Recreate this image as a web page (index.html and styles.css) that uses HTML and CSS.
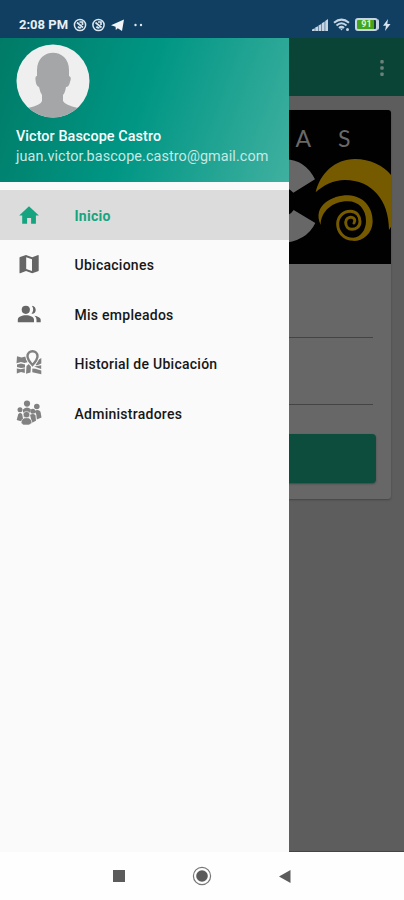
FILE: index.html
```html
<!DOCTYPE html>
<html lang="es">
<head>
<meta charset="utf-8">
<meta name="viewport" content="width=device-width, initial-scale=1">
<title>Inicio</title>
<link rel="stylesheet" href="styles.css">
</head>
<body>
<header class="status">
  <span class="clock">2:08 PM</span>
  <svg class="notices" width="78" height="16" viewBox="0 0 78 16">
    <g fill="none" stroke="#dce6ee" stroke-width="1.5">
      <circle cx="7" cy="8" r="5.6"/><path d="M4 5.5l6 5M5 9.5q1 2 3 1M6.5 5h3v3" stroke-width="1.7"/>
      <circle cx="25.500" cy="8" r="5.600"/><path d="M22.500 5.500l6 5M23.500 9.500q1 2 3 1M25 5h3v3" stroke-width="1.700"/>
    </g>
    <path d="M38 8.200L51 2.500 49 14 44.800 11.200 42.800 13 42.600 9.800z" fill="#f1f5f8"/>
    <circle cx="62.500" cy="8" r="1.200" fill="#dce6ee"/><circle cx="68" cy="8" r="1.200" fill="#dce6ee"/>
  </svg>
  <div class="system">
    <svg width="17" height="14" viewBox="0 0 17 14" fill="#c6d5e4"><path d="M0 13V11.500L2.800 10.300V13zM3.200 13V9.600L6 8.300V13zM6.500 13V7.600L9.300 6V13zM9.800 13V5.200L12.700 3.500V13zM13.200 13V2.900L16 1V13z"/></svg>
    <svg width="18" height="14" viewBox="0 0 18 14" fill="none" stroke="#c6d5e4" stroke-width="2"><path d="M1 4.800Q8.500-1.500 16 4.800M3.500 7.500Q8.500 3 13.500 7.500M6 10Q8.500 7.700 11 10"/><path d="M7 10.500h3l-1.500 2z" fill="#c6d5e4" stroke="none"/><circle cx="14.500" cy="11.500" r="1.500" fill="#c6d5e4" stroke="none"/></svg>
    <span class="battery">91</span>
    <svg class="bolt" width="8" height="12" viewBox="0 0 8 12"><path d="M5 0L0 6.800h3L2 12l5.500-7H4.300z" fill="#d7e4f0"/></svg>
  </div>
</header>

<div class="stage">
  <div class="page">
    <div class="appbar"><svg width="4" height="18" viewBox="0 0 4 18" fill="#6b8179"><rect x=".3" y="1" width="3.400" height="3.400" rx="1"/><rect x=".3" y="7.300" width="3.400" height="3.400" rx="1"/><rect x=".3" y="13.600" width="3.400" height="3.400" rx="1"/></svg></div>
    <main class="card">
      <svg class="brand" width="378" height="154" viewBox="13 110 378 154">
        <rect x="13" y="110" width="378" height="154" fill="#010101"/>
        <text x="295.500" y="147" class="brand-text">A</text>
        <text x="338" y="147" class="brand-text">S</text>
        <g transform="translate(280 90) scale(.33333)">
          <path fill="#676767" d="M0 210Q70 200 105 268L40 308Q25 290 0 290zM0 378Q28 380 41 360L106 399Q80 455 0 460z"/>
          <path fill="#765a00" d="M107 307C120 250 165 207 225 207C270 207 310 226 333 255V410L327 420C327 330 275 270 195 270C160 270 130 286 107 307z"/>
          <path fill="#765a00" d="M122 405C95 345 160 315 205 316C250 318 279 352 278 395C277 430 250 453 220 453V443C242 442 258 420 258 393C258 357 235 334 204 334C160 333 122 363 122 405z"/>
          <path fill="none" stroke="#765a00" stroke-width="9" stroke-linecap="round" d="M220 448C190 448 173 425 173 402C173 380 190 364 211 364C230 364 240 378 240 395C240 410 228 418 216 418C204 418 197 408 197 397C197 387 206 381 214 382C224 383 227 392 222 399"/>
        </g>
      </svg>
      <div class="field first"></div>
      <div class="field"></div>
      <div class="button"></div>
    </main>
  </div>

  <aside class="drawer">
    <section class="profile">
      <svg class="avatar" width="74" height="74" viewBox="0 0 74 74">
        <defs><clipPath id="round"><circle cx="37" cy="37" r="36.500"/></clipPath></defs>
        <g clip-path="url(#round)"><path fill="#efefef" d="M0 0h74v74H0z"/><path fill="#a4a6a8" d="M21 26C21 3 53 3 53 26V32Q56 33 54 38Q53 43 50 43Q49 49 47 51V57Q49 61 62 64L66 74H8L12 64Q25 61 26 57V51Q24 48 23 43Q20 42 19.500 36Q19 32 21 32z"/></g>
      </svg>
      <div class="name">Victor Bascope Castro</div>
      <div class="mail">juan.victor.bascope.castro@gmail.com</div>
    </section>
    <nav class="menu">
      <a class="item active"><svg width="26" height="26" viewBox="0 0 26 26"><path fill="currentColor" d="M11.100 21.700v-5.800h4v5.800h4.800V13.600h3L13 4.200 3.200 13.600h3v8.100z"/></svg><span>Inicio</span></a>
      <a class="item"><svg width="26" height="26" viewBox="0 0 26 26"><path fill="currentColor" fill-rule="evenodd" d="M22.200 4l-6 2.200L10 4 4.100 6Q3.500 6.200 3.500 6.800V21.700Q3.500 22.500 4.200 22.300L10 20l6.200 2.200 5.800-2Q22.700 20 22.700 19.400V4.600Q22.700 4 22.200 4zM16 20.100l-5.800-2.100V6.200L16 8.300z"/></svg><span>Ubicaciones</span></a>
      <a class="item"><svg width="26" height="26" viewBox="0 0 26 26" fill="currentColor"><circle cx="9.800" cy="8.800" r="4.100"/><path d="M1.800 21.200v-2.400c0-6 16.200-6 16.200 0v2.400zM15.500 12.700c4.900 1 6.200-7.200.4-8q2.700 4-.4 8zM18.500 14.800c3 .7 6.200 1.700 6.200 4v2.400h-4.200v-2.400q0-2.500-2-4z"/></svg><span>Mis empleados</span></a>
      <a class="item light"><svg width="26" height="26" viewBox="0 0 26 26"><g fill="currentColor"><path d="M1 6.200l4.500 1.300 4-1 1 3 1.500 2.500-3.500 1-3.500-1-4.500 1.200zM1 14.500l4-1 4 1v3l-4 .5-4-1zM.8 18.500l4 .8 4-1V23l-3.800-1-4.200 1.500zM10.500 16l3-2.500 1.500 2.500-.5 6.500-4.500 1.200zM16.300 18.500l3 .3 6 1.700v3.700l-9-2zM22 10l3.300-2v5.500l-4.500 2-2-1.500zM18 16.500l2-.2 5.200-1v3.700z"/></g><path d="M16.500 15.500Q11.500 9.800 11.500 6.500a5 5 0 0 1 10 0Q21.500 9.800 16.500 15.500z" fill="#fafafa" stroke="#fafafa" stroke-width="4"/><path d="M16.500 15Q11.500 9.500 11.500 6.200a5 5 0 0 1 10 0Q21.500 9.500 16.500 15z" fill="#fafafa" stroke="currentColor" stroke-width="2.400"/></svg><span>Historial de Ubicación</span></a>
      <a class="item light"><svg width="26" height="26" viewBox="0 0 26 26" fill="currentColor"><circle cx="11" cy="3.600" r="3.100"/><circle cx="4" cy="9.800" r="2.500"/><circle cx="20.800" cy="6.500" r="2.800"/><circle cx="16.800" cy="11.300" r="2.500"/><path d="M7 12V9.500q4-4.200 8 0l-1.700 3.500-3.200 2zM.7 20l1.500-5.800q2-2.500 4 0l1.300 7-3.500-.2zM14 14.800q3.500-2 5.500.5l.5 5.500-4 2zM18.500 11q4-2.300 6 .8l1 5.700-4.700 2-.5-5z"/><circle cx="10.500" cy="14.700" r="3.300" stroke="#fafafa" stroke-width=".6"/><path d="M5 23q.5-5.300 5.500-5.300t5.500 5.300l-3 2H7.500z" stroke="#fafafa" stroke-width=".6"/></svg><span>Administradores</span></a>
    </nav>
  </aside>
</div>

<footer class="softkeys">
  <svg width="12" height="12" viewBox="0 0 12 12"><path fill="#5b5b5b" d="M0 0h12v12H0z"/></svg>
  <svg width="20" height="20" viewBox="0 0 20 20"><circle cx="10" cy="10" r="8.600" fill="none" stroke="#777" stroke-width="1.200"/><circle cx="10" cy="10" r="5.800" fill="#5b5b5b"/></svg>
  <svg width="12" height="13" viewBox="0 0 12 13"><path fill="#5b5b5b" d="M11.500 0v13L0 6.500z"/></svg>
</footer>
</body>
</html>
```
FILE: styles.css
```css
* { box-sizing: border-box; }
body {
  margin: 0;
  width: 404px;
  height: 900px;
  display: flex;
  flex-direction: column;
  overflow: hidden;
  background: #fefefe;
  font-family: Roboto, sans-serif;
}
svg { display: block; flex: none; }

.status {
  height: 38px;
  flex: none;
  display: flex;
  align-items: center;
  padding: 11px 13px 0 19px;
  background: #113f61;
  color: #e9f0f5;
}
.clock { width: 54px; font-size: 13px; font-weight: 700; line-height: 16px; white-space: nowrap; }
.system { margin-left: auto; display: flex; align-items: center; gap: 4px; }
.battery {
  width: 23px;
  height: 13px;
  margin-right: 1px;
  border: 2px solid #c6d5e4;
  border-radius: 3px;
  background: linear-gradient(90deg, #43a51c 88%, #173b3b 88%);
  color: #d8f4cb;
  font-size: 9px;
  font-weight: 700;
  line-height: 9px;
  text-align: center;
  box-shadow: 2px 0 0 -1px #c6d5e4;
}

.stage { position: relative; height: 814px; flex: none; }
.page { height: 100%; background: #5d5d5d; border-bottom: 1px solid #444; }
.appbar {
  height: 58px;
  display: flex;
  align-items: center;
  justify-content: flex-end;
  padding: 2px 20px 0 0;
  background: #0a4437;
}
.card {
  width: 378px;
  height: 389px;
  margin: 14px 0 0 13px;
  overflow: hidden;
  border-radius: 3px;
  background: #676767;
  box-shadow: 0 1px 2px #444;
}
.brand-text { fill: #696969; font: 23px Lato, sans-serif; }
.field { height: 67px; margin: 0 18px 0 16px; border-bottom: 1px solid #444; }
.field.first { height: 74px; }
.button { height: 49px; margin: 29px 15px 0; border-radius: 4px; background: #0d4d3d; box-shadow: 0 1px 2px #444; }

.drawer { position: absolute; top: 0; left: 0; width: 289px; height: 814px; background: #fafafa; }
.profile {
  height: 144px;
  padding: 6px 16px 0;
  background: linear-gradient(110deg, #007b67 0%, #009684 48%, #40b0a0 100%);
  color: #f8ffff;
}
.name { width: max-content; margin-top: 9px; font-size: 14.4px; font-weight: 500; line-height: 20px; letter-spacing: .07px; }
.mail { width: max-content; font-size: 14.4px; line-height: 20px; letter-spacing: .09px; color: #c6e9e4; }
.menu { padding-top: 8px; }
.item { height: 49.5px; display: flex; align-items: center; padding-left: 16px; gap: 32.5px; color: #666; }
.item span { padding-top: 2px; color: #171717; font-size: 14px; font-weight: 500; letter-spacing: .26px; white-space: nowrap; }
.item.light { color: #818181; }
.item.active { background: #dcdcdc; color: #16a480; }
.item.active span { color: #16a480; font-weight: 700; }

.softkeys { height: 48px; display: flex; align-items: center; padding-left: 113px; gap: 67px; }
```
